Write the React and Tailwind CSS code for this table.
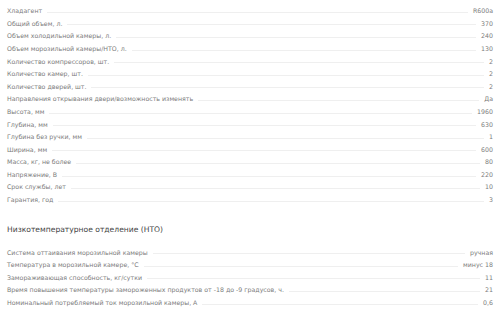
const mainSpecs = [
  ["Хладагент", "R600a"],
  ["Общий объем, л.", "370"],
  ["Объем холодильной камеры, л.", "240"],
  ["Объем морозильной камеры/НТО, л.", "130"],
  ["Количество компрессоров, шт.", "2"],
  ["Количество камер, шт.", "2"],
  ["Количество дверей, шт.", "2"],
  ["Направления открывания двери/возможность изменять", "Да"],
  ["Высота, мм", "1960"],
  ["Глубина, мм", "630"],
  ["Глубина без ручки, мм", "1"],
  ["Ширина, мм", "600"],
  ["Масса, кг, не более", "80"],
  ["Напряжение, В", "220"],
  ["Срок службы, лет", "10"],
  ["Гарантия, год", "3"],
];

const freezerSpecs = [
  ["Система оттаивания морозильной камеры", "ручная"],
  ["Температура в морозильной камере, °С", "минус 18"],
  ["Замораживающая способность, кг/сутки", "11"],
  ["Время повышения температуры замороженных продуктов от -18 до -9 градусов, ч.", "21"],
  ["Номинальный потребляемый ток морозильной камеры, А", "0,6"],
];

function SpecRow({ label, value }) {
  return (
    <div className="flex items-center h-[12.6px] text-[6.25px] leading-none text-[#7c7c7c]">
      <span className="whitespace-nowrap">{label}</span>
      <span className="flex-1 mx-[5px] mt-[2px] border-b border-[#efefef]" />
      <span className="whitespace-nowrap">{value}</span>
    </div>
  );
}

export default function App() {
  return (
    <div className="w-[500px] h-[311px] bg-white overflow-hidden px-[7px] pt-[5px] font-['DejaVu_Sans',sans-serif]">
      <div>
        {mainSpecs.map(([l, v]) => (
          <SpecRow key={l} label={l} value={v} />
        ))}
      </div>
      <div className="h-[40px] pt-[17px]">
        <h3 className="text-[7.6px] leading-[12px] text-[#444]">
          Низкотемпературное отделение (НТО)
        </h3>
      </div>
      <div>
        {freezerSpecs.map(([l, v]) => (
          <SpecRow key={l} label={l} value={v} />
        ))}
      </div>
    </div>
  );
}
